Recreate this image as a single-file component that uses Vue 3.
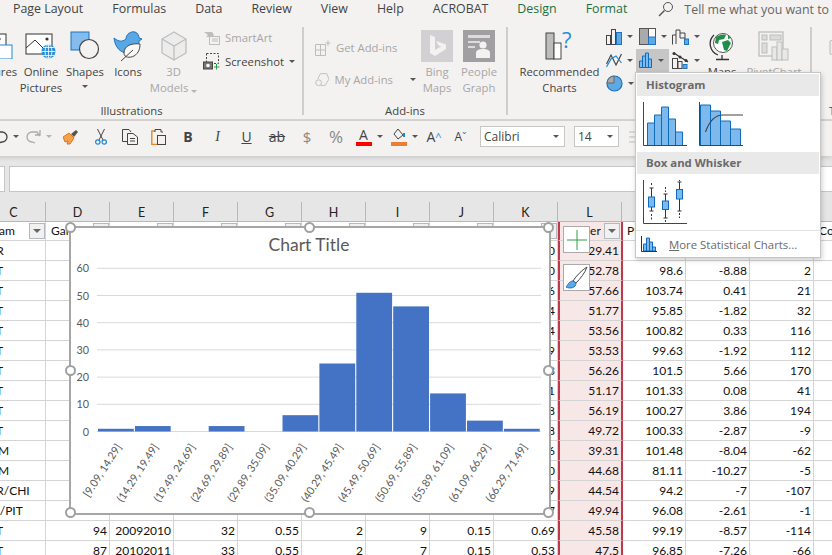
<script setup>
const tabs = ['Page Layout', 'Formulas', 'Data', 'Review', 'View', 'Help', 'ACROBAT', 'Design', 'Format']
const columns = ['C', 'D', 'E', 'F', 'G', 'H', 'I', 'J', 'K', 'L', 'M', 'N', 'O', 'P']
const headers = ['Team', 'Games', '', '', '', '', '', '', '', 'Center', 'PI', '', '', 'Co']

// only the cells which are not hidden behind the chart and the menu
const rows = [
  ['TOR', '', '', '', '', '', '', '', '0.60', '29.41', '', '', '', ''],
  ['DET', '', '', '', '', '', '', '', '0.60', '52.78', '98.6', '-8.88', '2', ''],
  ['DET', '', '', '', '', '', '', '', '0.66', '57.66', '103.74', '0.41', '21', ''],
  ['DET', '', '', '', '', '', '', '', '0.54', '51.77', '95.85', '-1.82', '32', ''],
  ['DET', '', '', '', '', '', '', '', '0.64', '53.56', '100.82', '0.33', '116', ''],
  ['DET', '', '', '', '', '', '', '', '0.59', '53.53', '99.63', '-1.92', '112', ''],
  ['DET', '', '', '', '', '', '', '', '0.63', '56.26', '101.5', '5.66', '170', ''],
  ['DET', '', '', '', '', '', '', '', '0.61', '51.17', '101.33', '0.08', '41', ''],
  ['DET', '', '', '', '', '', '', '', '0.58', '56.19', '100.27', '3.86', '194', ''],
  ['DET', '', '', '', '', '', '', '', '0.58', '49.72', '100.33', '-2.87', '-9', ''],
  ['MEM', '', '', '', '', '', '', '', '0.46', '39.31', '101.48', '-8.04', '-62', ''],
  ['MEM', '', '', '', '', '', '', '', '0.50', '44.68', '81.11', '-10.27', '-5', ''],
  ['TOR/CHI', '', '', '', '', '', '', '', '0.49', '44.54', '94.2', '-7', '-107', ''],
  ['PHI/PIT', '89', '20082009', '31', '0.6', '2', '1', '0.25', '0.7', '49.94', '96.08', '-2.61', '-1', ''],
  ['DET', '94', '20092010', '32', '0.55', '2', '9', '0.15', '0.69', '45.58', '99.19', '-8.57', '-114', ''],
  ['DET', '87', '20102011', '33', '0.55', '2', '7', '0.15', '0.53', '47.5', '96.85', '-7.26', '-66', '']
]

const ticks = [60, 50, 40, 30, 20, 10, 0].map((value) => ({ value, y: 204.5 - value * 2.72 }))

const bins = [
  ['[9.09, 14.29]', 1], ['(14.29, 19.49]', 2], ['(19.49, 24.69]', 0], ['(24.69, 29.89]', 2],
  ['(29.89, 35.09]', 0], ['(35.09, 40.29]', 6], ['(40.29, 45.49]', 25], ['(45.49, 50.69]', 51],
  ['(50.69, 55.89]', 46], ['(55.89, 61.09]', 14], ['(61.09, 66.29]', 4], ['(66.29, 71.49]', 1]
].map(([label, count], i) => ({
  label,
  x: 28 + i * 36.9,
  y: 204.5 - count * 2.72,
  height: count * 2.72
}))

const handles = [
  ['0%', '0%'], ['50%', '0%'], ['100%', '0%'],
  ['0%', '50%'], ['100%', '50%'],
  ['0%', '100%'], ['50%', '100%'], ['100%', '100%']
]
</script>

<template>
  <div class="app">
    <div class="tabs">
      <span v-for="tab in tabs" :key="tab" :class="{ green: tab === 'Design' || tab === 'Format' }">{{ tab }}</span>
      <span class="tell">
        <svg width="16" height="16" viewBox="0 0 16 16"><circle cx="10" cy="6" r="4.5" fill="none" stroke="#555" /><path d="M6.5 9.5L1 15" stroke="#555" stroke-width="1.4" /></svg>
        <em>Tell me what you want to do</em>
      </span>
    </div>

    <div class="ribbon">
      <div class="group illustrations">
        <div class="body">
          <div class="big pictures">
            <div class="icon">
              <svg width="34" height="26" viewBox="0 0 34 26"><rect x="1" y="1" width="26" height="20" fill="#fff" stroke="#333" /><circle cx="20" cy="6" r="1.6" fill="#333" /><rect x="13" y="12" width="20" height="14" fill="#fff" stroke="#1e87d6" /></svg>
            </div>
            <span>Pictures</span>
          </div>
          <div class="big online">
            <div class="icon">
              <svg width="32" height="26" viewBox="0 0 32 26">
                <rect x="1" y="1" width="26" height="20" fill="#fff" stroke="#333" />
                <path d="M1 15L10 7L18 15" fill="none" stroke="#333" />
                <circle cx="22" cy="6" r="1.6" fill="#333" />
                <circle cx="23.5" cy="18.5" r="7" fill="#2a8fd9" />
                <path d="M16.5 18.5H30.5M23.5 11.5V25.5M18 14.5H29M18 22.5H29" stroke="#fff" stroke-width=".8" />
                <ellipse cx="23.5" cy="18.5" rx="3.4" ry="7" fill="none" stroke="#fff" stroke-width=".8" />
              </svg>
            </div>
            <span>Online</span><span>Pictures</span>
          </div>
          <div class="big shapes">
            <div class="icon">
              <svg width="30" height="30" viewBox="0 0 30 30"><rect x="1" y="1" width="18" height="18" fill="#83bced" stroke="#1e73be" /><circle cx="19" cy="18" r="9.5" fill="#f3f2f1" stroke="#444" stroke-width="1.2" /></svg>
            </div>
            <span>Shapes</span><i class="caret"></i>
          </div>
          <div class="big icons">
            <div class="icon">
              <svg width="30" height="32" viewBox="0 0 30 32">
                <path d="M1 8C6 12 9 12 13 9C13 4 18 1 22 2C25 3 26 6 26 8L29 9L26 11C26 18 22 23 15 23C7 23 2 17 1 8Z" fill="#5aa7e6" stroke="#1e73be" />
                <path d="M27 14C20 13 11 15 11 23C11 28 17 28 21 26C26 23 27 18 27 14Z" fill="#f8f8f8" stroke="#444" />
                <path d="M8 31L20 20" stroke="#444" />
              </svg>
            </div>
            <span>Icons</span>
          </div>
          <div class="big muted models">
            <div class="icon">
              <svg width="26" height="30" viewBox="0 0 26 30"><path d="M13 1L25 8V22L13 29L1 22V8Z" fill="#ececec" stroke="#bdbdbd" stroke-width="1.3" /><path d="M1 8L13 15L25 8M13 15V29" fill="none" stroke="#bdbdbd" stroke-width="1.3" /></svg>
            </div>
            <span>3D</span><span>Models <i class="caret light"></i></span>
          </div>
          <div class="small-col art">
            <div class="small muted">
              <svg width="17" height="14" viewBox="0 0 17 14"><path d="M1 1H9L11 4L9 6H3L5 4Z" fill="#bdbdbd" /><rect x="6.5" y="5.5" width="10" height="8" fill="#f3f2f1" stroke="#bdbdbd" /><path d="M9 8H15M9 10H15" stroke="#bdbdbd" /></svg>
              <span>SmartArt</span>
            </div>
            <div class="small">
              <svg width="17" height="17" viewBox="0 0 17 17"><rect x="3.5" y=".5" width="12" height="10" fill="none" stroke="#444" stroke-dasharray="2 1.5" /><rect x=".5" y="9" width="9" height="7" fill="#777" stroke="#444" /><circle cx="5" cy="12.5" r="1.8" fill="#fff" /><path d="M13.5 11V16.5M11 14H16.5" stroke="#2c9e4b" /></svg>
              <span>Screenshot</span><i class="caret"></i>
            </div>
          </div>
        </div>
        <div class="label">Illustrations</div>
      </div>

      <div class="group addins">
        <div class="body">
          <div class="small-col wide">
            <div class="small muted">
              <svg width="16" height="16" viewBox="0 0 16 16"><path d="M.5 4.5H10.5V15.5H.5ZM.5 10H10.5M5.5 4.5V15.5" fill="none" stroke="#bdbdbd" /><path d="M13 .5V6M10.5 3H15.5" stroke="#bdbdbd" /></svg>
              <span>Get Add-ins</span>
            </div>
            <div class="small muted">
              <svg width="16" height="16" viewBox="0 0 16 16"><path d="M6 1L13 1L15.5 7L11 14H6" fill="none" stroke="#bdbdbd" /><path d="M6 1L3 7" stroke="#bdbdbd" /><circle cx="4" cy="11" r="3.2" fill="none" stroke="#bdbdbd" /></svg>
              <span>My Add-ins</span><i class="caret far"></i>
            </div>
          </div>
          <div class="big muted store">
            <div class="icon">
              <svg width="32" height="32" viewBox="0 0 32 32"><rect width="32" height="32" fill="#d2d0d2" /><path d="M9 5L14 7V20L20 16.5L17 15L15.5 11L25 14.5V19L14 26L9 23Z" fill="#f3f2f1" /></svg>
            </div>
            <span>Bing</span><span>Maps</span>
          </div>
          <div class="big muted store">
            <div class="icon">
              <svg width="32" height="32" viewBox="0 0 32 32"><rect width="32" height="32" fill="#a19fa1" /><path d="M5 5H27V8H5ZM5 11H17V13H5ZM5 16H12V18H5Z" fill="#dcdcdc" /><circle cx="20" cy="15" r="3.6" fill="#f3f2f1" /><path d="M13 28V23C13 20 16 19 20 19C24 19 27 20 27 23V28Z" fill="#f3f2f1" /></svg>
            </div>
            <span>People</span><span>Graph</span>
          </div>
        </div>
        <div class="label">Add-ins</div>
      </div>

      <div class="group charts">
        <div class="body">
          <div class="big recommended">
            <div class="icon">
              <svg width="30" height="30" viewBox="0 0 30 30"><rect x="1" y="2" width="8" height="26" fill="#bdbdbb" stroke="#444" /><rect x="9" y="12" width="7" height="16" fill="#fff" stroke="#444" /><text x="17" y="17" class="help">?</text></svg>
            </div>
            <span>Recommended</span><span>Charts</span>
          </div>
          <div class="chart-grid">
            <div class="mini">
              <svg width="16" height="16" viewBox="0 0 16 16"><rect x=".5" y="6.5" width="4" height="9" fill="#f3f2f1" stroke="#444" /><rect x="5.5" y=".5" width="4" height="15" fill="#f3f2f1" stroke="#444" /><rect x="10.5" y="3.5" width="5" height="12" fill="#5ca9e6" stroke="#1e73be" /></svg><i class="caret"></i>
            </div>
            <div class="mini">
              <svg width="17" height="17" viewBox="0 0 17 17"><rect x=".5" y=".5" width="16" height="16" fill="#fff" stroke="#555" /><rect x=".5" y=".5" width="9" height="16" fill="#aaa" stroke="#555" /><rect x="9.5" y="9" width="7" height="7.5" fill="#5ca9e6" stroke="#1e73be" /></svg><i class="caret"></i>
            </div>
            <div class="mini">
              <svg width="17" height="16" viewBox="0 0 17 16"><path d="M.5 15.5V6H4V1H8V4H13V15.5" fill="none" stroke="#444" /><path d="M4 15V6M8 4V9H13" fill="none" stroke="#444" /><rect x="12.5" y="10" width="4" height="5.5" fill="#5ca9e6" stroke="#1e73be" /></svg><i class="caret"></i>
            </div>
            <div class="mini">
              <svg width="16" height="16" viewBox="0 0 16 16"><path d="M.5 12L5 3L10 13L15.5 2" fill="none" stroke="#444" stroke-width="1.2" /><path d="M.5 15L5 7L10 4L15.5 11" fill="none" stroke="#1e87d6" stroke-width="1.2" /></svg><i class="caret"></i>
            </div>
            <div class="mini active">
              <svg width="14" height="16" viewBox="0 0 14 16"><path d="M.5 15.5V9H3.5V4H6.5V1H9.5V7H12.5V15.5ZM3.5 9V15.5M6.5 4V15.5M9.5 7V15.5" fill="#7db9ec" stroke="#0f6cbd" /></svg><i class="caret"></i>
            </div>
            <div class="mini">
              <svg width="17" height="17" viewBox="0 0 17 17"><path d="M2 1L8 5L13 8L16 10" fill="none" stroke="#333" stroke-width="1.2" /><circle cx="2" cy="1.6" r="1.5" fill="#333" /><circle cx="8" cy="5" r="1.5" fill="#333" /><circle cx="14" cy="8.5" r="1.5" fill="#333" /><rect x=".5" y="6.5" width="5" height="10" fill="#f3f2f1" stroke="#444" /><rect x="6" y="9.5" width="4" height="7" fill="#f3f2f1" stroke="#444" /><rect x="11" y="12.5" width="4" height="4" fill="#5ca9e6" stroke="#1e73be" /></svg><i class="caret"></i>
            </div>
            <div class="mini">
              <svg width="17" height="17" viewBox="0 0 17 17"><circle cx="8.5" cy="8.5" r="7.5" fill="#5ca9e6" stroke="#1e73be" stroke-width="1.2" /><path d="M8 8V1A7.5 7.5 0 0 0 1 8Z" fill="#aaa" stroke="#666" /></svg><i class="caret"></i>
            </div>
          </div>
          <div class="big maps">
            <div class="icon">
              <svg width="26" height="30" viewBox="0 0 26 30">
                <circle cx="14" cy="12" r="9.5" fill="#fff" stroke="#555" />
                <path d="M7 6C10 4 14 3 17 4L15 8L10 9L9 13L6 12ZM13 11L19 9L22 12L18 20L15 19ZM19 4L22 7L19 8Z" fill="#1f8f45" />
                <path d="M5 4A12 12 0 0 0 9 24M13 24V28M7 28.5H20" fill="none" stroke="#333" stroke-width="1.3" />
              </svg>
            </div>
            <span>Maps</span>
          </div>
          <div class="big muted pivot">
            <div class="icon">
              <svg width="32" height="30" viewBox="0 0 32 30"><rect x="1" y="1" width="24" height="24" fill="#f3f2f1" stroke="#bdbdbd" stroke-width="1.3" /><rect x="4" y="4" width="5" height="5" fill="#dcdcdc" stroke="#bdbdbd" /><rect x="12" y="4" width="11" height="5" fill="#dcdcdc" stroke="#bdbdbd" /><rect x="4" y="12" width="5" height="10" fill="#dcdcdc" stroke="#bdbdbd" /><rect x="14" y="16" width="5" height="13" fill="#e8e8e8" stroke="#bdbdbd" /><rect x="19" y="11" width="5" height="18" fill="#e8e8e8" stroke="#bdbdbd" /><rect x="24" y="18" width="6" height="11" fill="#e8e8e8" stroke="#bdbdbd" /></svg>
            </div>
            <span>PivotChart</span>
          </div>
        </div>
        <div class="label">Charts</div>
      </div>

      <div class="group tours">
        <div class="body">
          <div class="big muted tour">
            <div class="icon">
              <svg width="32" height="24" viewBox="0 0 32 24"><path d="M16 1L30 7V20L16 23L2 20V7Z" fill="#ececec" stroke="#bdbdbd" /></svg>
            </div>
            <span>3D</span><span>Map</span>
          </div>
        </div>
        <div class="label">Tours</div>
      </div>
    </div>

    <div class="toolbar">
      <div class="tool w32">
        <svg width="14" height="15" viewBox="0 0 14 15"><path d="M0 3H8A5 5 0 0 1 8 13L4 14" fill="none" stroke="#444" stroke-width="1.3" /></svg><i class="caret"></i>
      </div>
      <div class="tool w34">
        <svg width="15" height="15" viewBox="0 0 15 15"><path d="M14 7L11 3H6A5 5 0 0 0 6 13L9 14M14 1V6H9" fill="none" stroke="#aaa" stroke-width="1.3" /></svg><i class="caret light"></i>
      </div>
      <div class="tool w30">
        <svg width="16" height="16" viewBox="0 0 16 16"><path d="M0 8L6 4L11 9L7 15H4L5 12L2 13Z" fill="#f5a04a" stroke="#d9771f" /><path d="M8 5L13 1L15 3L11 8Z" fill="#555" /></svg>
      </div>
      <div class="tool w29">
        <svg width="12" height="16" viewBox="0 0 12 16"><path d="M2.5 0L8 11M9.5 0L4 11" stroke="#444" /><circle cx="2.8" cy="13" r="2.2" fill="none" stroke="#1e87d6" stroke-width="1.2" /><circle cx="9.2" cy="13" r="2.2" fill="none" stroke="#1e87d6" stroke-width="1.2" /></svg>
      </div>
      <div class="tool w29">
        <svg width="16" height="16" viewBox="0 0 16 16"><path d="M5.5 12.5H.5V.5H7L9 3" fill="none" stroke="#444" /><path d="M5.5 4.5H11L15.5 8V15.5H5.5Z" fill="#f3f2f1" stroke="#444" /><path d="M8 9.5H13M8 12H13" stroke="#444" /></svg>
      </div>
      <div class="tool w29">
        <svg width="15" height="16" viewBox="0 0 15 16"><path d="M4 2H.8V15.5H6" fill="none" stroke="#e8862c" stroke-width="1.4" /><path d="M4 3V.5H10V3H12" fill="none" stroke="#444" /><rect x="6.5" y="6.5" width="8" height="9" fill="#f3f2f1" stroke="#444" /></svg>
      </div>
      <div class="tool w30 glyph bold">B</div>
      <div class="tool w29 glyph italic">I</div>
      <div class="tool w29 glyph under">U</div>
      <div class="tool w32 glyph strike">ab</div>
      <div class="tool w28 glyph gray">$</div>
      <div class="tool w30 glyph gray big-glyph">%</div>
      <div class="tool w36">
        <div class="swatch"><b>A</b><u class="red"></u></div><i class="caret"></i>
      </div>
      <div class="tool w35">
        <div class="swatch">
          <svg width="13" height="13" viewBox="0 0 13 13"><path d="M5 1L10 7L5 11L1 6Z" fill="none" stroke="#444" /><path d="M11 5V9" stroke="#1e87d6" stroke-width="2" /></svg>
          <u class="orange"></u>
        </div><i class="caret"></i>
      </div>
      <div class="tool w24 grow">A<sup>^</sup></div>
      <div class="tool w29 grow shrink">A<sup>ˇ</sup></div>
      <div class="select font"><span>Calibri</span><i class="caret"></i></div>
      <div class="select size"><span>14</span><i class="caret"></i></div>
      <svg class="align" width="14" height="12" viewBox="0 0 14 12"><path d="M0 1H14M0 6H14M0 11H14" stroke="#bbb" /></svg>
    </div>

    <div class="formula">
      <div class="namebox"></div>
      <div class="fx"></div>
    </div>

    <div class="sheet">
      <div class="col-heads">
        <div v-for="col in columns" :key="col" class="col-head">{{ col }}</div>
      </div>
      <div class="row head-row">
        <div v-for="(title, i) in headers" :key="i" class="cell head" :class="{ sel: i === 9 }">
          <span class="title">{{ title }}</span>
          <span v-if="i < 13 && i !== 10" class="filter"><i></i></span>
        </div>
      </div>
      <div v-for="(row, r) in rows" :key="r" class="row">
        <div v-for="(value, i) in row" :key="i" class="cell" :class="{ text: i === 0, sel: i === 9 }">{{ value }}</div>
      </div>

      <!-- chart floats over the cells -->
      <div class="chart">
        <svg width="480" height="287" viewBox="0 0 480 287">
          <text x="239" y="24" class="chart-title" text-anchor="middle">Chart Title</text>
          <g v-for="tick in ticks" :key="tick.value">
            <line x1="27" x2="471" :y1="tick.y" :y2="tick.y" stroke="#d9d9d9" />
            <text x="19" :y="tick.y + 4" class="axis" text-anchor="end">{{ tick.value }}</text>
          </g>
          <g v-for="bin in bins" :key="bin.label">
            <rect :x="bin.x" :y="bin.y" width="35.8" :height="bin.height" fill="#4472c4" />
            <text class="axis cat" text-anchor="end" :transform="`translate(${bin.x + 24} 220) rotate(-57)`">{{ bin.label }}</text>
          </g>
        </svg>
        <span v-for="(h, i) in handles" :key="i" class="handle" :style="{ left: h[0], top: h[1] }"></span>
      </div>

      <div class="chart-btn plus">
        <svg width="20" height="20" viewBox="0 0 20 20"><path d="M10 0V20M0 10H20" stroke="#2c9e4b" /></svg>
      </div>
      <div class="chart-btn brush">
        <svg width="24" height="24" viewBox="0 0 24 24"><path d="M22 1C17 4 11 10 8 15L11 17C15 13 20 7 22 1Z" fill="#fff" stroke="#444" /><path d="M8 15C4 15 3 19 1 21C5 23 11 22 11 17Z" fill="#5ca9e6" stroke="#1e73be" /></svg>
      </div>
    </div>

    <div class="menu">
      <div class="menu-head">Histogram</div>
      <div class="menu-icons">
        <svg width="44" height="44" viewBox="0 0 44 44">
          <path d="M4.5 21H11.5V43.5H4.5ZM11.5 13H18.5V43.5H11.5ZM18.5 5H25.5V43.5H18.5ZM25.5 17H32.5V43.5H25.5ZM32.5 30H39.5V43.5H32.5Z" fill="#7db9ec" stroke="#0f6cbd" />
          <path d="M.5 0V43.5H44" fill="none" stroke="#444" />
        </svg>
        <svg width="44" height="44" viewBox="0 0 44 44">
          <path d="M1.5 3H11.5V43.5H1.5ZM11.5 9H21.5V43.5H11.5ZM21.5 19H31.5V43.5H21.5ZM31.5 27H41.5V43.5H31.5Z" fill="#7db9ec" stroke="#0f6cbd" />
          <path d="M.5 0V43.5H44" fill="none" stroke="#444" />
          <path d="M6.5 30C10 20 16 13 24 13H44" fill="none" stroke="#444" stroke-width="1.2" />
        </svg>
      </div>
      <div class="menu-head">Box and Whisker</div>
      <div class="menu-icons">
        <svg width="44" height="44" viewBox="0 0 44 44">
          <path d="M.5 0V43.5H44" fill="none" stroke="#444" />
          <path d="M8.5 8V31M22.5 14V38M36.5 2V31M6.5 8H10.5M6.5 31H10.5M20.5 14H24.5M20.5 38H24.5M34.5 2H38.5M34.5 31H38.5" stroke="#333" />
          <path d="M8.5 3V6M8.5 34V40M22.5 7V12M22.5 40V42M36.5 0V1M36.5 33V38" stroke="#333" stroke-dasharray="2 1.5" />
          <rect x="5.5" y="17" width="6" height="10" fill="#7db9ec" stroke="#0f6cbd" />
          <rect x="19.5" y="21" width="6" height="8.5" fill="#7db9ec" stroke="#0f6cbd" />
          <rect x="33.5" y="9.5" width="6" height="9.5" fill="#7db9ec" stroke="#0f6cbd" />
        </svg>
      </div>
      <div class="menu-more">
        <svg width="16" height="16" viewBox="0 0 16 16"><path d="M2.5 15V8H5.5V2H8.5V6H11.5V11H14.5V15Z" fill="#7db9ec" stroke="#0f6cbd" /><path d="M5.5 8V15M8.5 6V15M11.5 11V15" stroke="#0f6cbd" /><path d="M.5 0V15.5H16" fill="none" stroke="#333" /></svg>
        <span><u>M</u>ore Statistical Charts...</span>
      </div>
    </div>
  </div>
</template>

<style>
html, body { margin: 0; background: #e6e6e6; }
</style>

<style scoped>
.app {
  position: relative;
  width: 832px;
  height: 555px;
  overflow: hidden;
  background: #e6e6e6;
  font-family: "Open Sans", sans-serif;
  font-size: 11.3px;
  color: #444;
}

.tabs {
  height: 18px;
  display: flex;
  gap: 29px;
  padding-left: 13px;
  background: #f3f2f1;
  font-size: 12.4px;
  line-height: 17px;
  white-space: nowrap;
}
.tabs .green { color: #1d6f42; }
.tell {
  display: flex;
  align-items: center;
  gap: 10px;
  margin-left: 2px;
  color: #666;
}
.tell em { font-style: normal; }

.ribbon {
  display: flex;
  height: 92px;
  padding-top: 9px;
  margin-left: -26px;
  width: 900px;
  background: #f3f2f1;
  border-bottom: 2px solid #d6d4d2;
}
.group {
  display: flex;
  flex-direction: column;
  height: 88px;
  flex: none;
  box-sizing: border-box;
  border-right: 2px solid #d0cecc;
}
.group .body { display: flex; height: 76px; flex: none; }
.group .label { text-align: center; line-height: 16px; color: #444; height: 12px; }
.illustrations { width: 330px; }
.addins { width: 204px; }
.charts { width: 304px; }
.tours { width: 60px; border-right: 0; padding-left: 9px; }
.tours .label { width: 46px; }
.illustrations .label { padding-right: 13px; }
.charts .label { visibility: hidden; }

.big {
  display: flex;
  flex-direction: column;
  align-items: center;
  flex: none;
  line-height: 16px;
  white-space: nowrap;
}
.big .icon {
  height: 37px;
  display: flex;
  align-items: center;
  justify-content: center;
}
.big .caret { margin-top: 5px; }
.muted, .muted span { color: #a8a6a6; }
.pictures { width: 44px; }
.online { width: 46px; }
.shapes { width: 42px; }
.icons { width: 44px; }
.models { width: 47px; }
.store { width: 42px; }
.recommended { width: 87px; }
.maps { width: 42px; }
.pivot { width: 62px; }
.tour { width: 46px; }
.recommended .help { font-size: 22px; fill: #2a8fd9; }

.small-col { display: flex; flex-direction: column; width: 100px; margin-left: 6px; }
.small-col.art { gap: 3px; }
.small-col.wide { gap: 11px; margin-left: 11px; width: 101px; padding-top: 10px; }
.small { display: flex; align-items: center; gap: 5px; height: 21px; white-space: nowrap; }
.small .caret { margin-left: 0; }
.small .caret.far { margin-left: 12px; }

.charts .body { padding-left: 8px; }
.chart-grid {
  display: grid;
  grid-template-columns: repeat(3, 33px);
  grid-auto-rows: 23.5px;
  width: 99px;
  margin-top: -2px;
  margin-right: -1px;
}
.mini {
  display: flex;
  align-items: center;
  gap: 5px;
  padding-left: 3px;
}
.mini.active { background: #c6c6c6; }

.caret {
  display: inline-block;
  width: 0;
  height: 0;
  border-left: 3.5px solid transparent;
  border-right: 3.5px solid transparent;
  border-top: 3.5px solid #555;
  vertical-align: middle;
  flex: none;
}
.caret.light { border-top-color: #b5b5b5; }

.toolbar {
  position: relative;
  z-index: 1;
  display: flex;
  align-items: center;
  height: 35px;
  padding-bottom: 4px;
  box-sizing: border-box;
  margin-left: -10px;
  background: #f3f2f1;
  box-shadow: 0 2px 4px rgba(0, 0, 0, .12);
}
.tool {
  display: flex;
  align-items: center;
  justify-content: center;
  gap: 5px;
  flex: none;
  height: 31px;
  color: #444;
}
.w24 { width: 24px; }
.w28 { width: 28px; }
.w29 { width: 29px; }
.w30 { width: 30px; }
.w32 { width: 32px; }
.w34 { width: 34px; }
.w35 { width: 35px; }
.w36 { width: 36px; }
.glyph { font-size: 14px; }
.bold { font-weight: 700; }
.italic { font-style: italic; font-family: "Liberation Serif", serif; }
.under { text-decoration: underline; }
.strike { text-decoration: line-through; }
.gray { color: #888; font-size: 15px; }
.big-glyph { font-size: 17px; }
.swatch {
  display: flex;
  flex-direction: column;
  align-items: center;
  width: 16px;
  font-size: 14px;
  line-height: 15px;
}
.swatch b { font-weight: 400; }
.swatch svg { height: 15px; }
.swatch u { display: block; width: 16px; height: 4px; }
.swatch .red { background: #f00; }
.swatch .orange { background: #ed7d31; }
.grow { font-size: 14px; gap: 0; }
.grow sup { font-size: 11px; color: #1e87d6; line-height: 0; }
.shrink { font-size: 12px; }
.select {
  display: flex;
  align-items: center;
  justify-content: space-between;
  flex: none;
  height: 21px;
  box-sizing: border-box;
  padding: 0 5px 0 3px;
  background: #fff;
  border: 1px solid #c6c6c6;
  font-size: 12px;
  color: #444;
}
.font { width: 85px; margin-left: 5px; }
.size { width: 45px; margin-left: 9px; }
.align { margin-left: 10px; flex: none; }

.formula {
  display: flex;
  gap: 4px;
  height: 46px;
  padding-top: 10px;
  box-sizing: border-box;
}
.namebox, .fx {
  height: 26px;
  box-sizing: border-box;
  background: #fff;
  border: 1px solid #c6c6c6;
}
.namebox { width: 20px; margin-left: -15px; flex: none; }
.fx { flex: 1; border-right: 0; }

.sheet {
  position: absolute;
  left: -18px;
  top: 202px;
  width: 880px;
  height: 353px;
  background: #fff;
  font-family: Lato, sans-serif;
  font-size: 12px;
  color: #111;
}
.col-heads {
  display: flex;
  height: 20px;
  background: #e6e6e6;
  border-bottom: 1px solid #b8b8b8;
  box-sizing: border-box;
}
.col-head {
  flex: none;
  width: 64px;
  box-sizing: border-box;
  border-right: 1px solid #b8b8b8;
  text-align: center;
  line-height: 21px;
  font-size: 12.5px;
  color: #222;
}
.row { display: flex; height: 20px; }
.head-row { height: 19px; }
.cell {
  flex: none;
  width: 64px;
  box-sizing: border-box;
  border-right: 1px solid #d4d4d4;
  border-bottom: 1px solid #d4d4d4;
  text-align: right;
  padding-right: 2px;
  line-height: 20px;
  white-space: nowrap;
  overflow: hidden;
}
.cell.text { text-align: left; padding-left: 0; text-indent: -2px; }
.cell.sel {
  background: #f8e7e7;
  border-left: 2px solid #c0394b;
  border-right: 2px solid #c0394b;
  width: 65px;
  margin-right: -1px;
  position: relative;
}
.cell.head {
  display: flex;
  align-items: center;
  justify-content: space-between;
  padding: 0 0 0 5px;
  text-align: left;
  line-height: 18px;
}
.cell.head.sel { padding-right: 1px; }
.title { overflow: hidden; }
.filter {
  flex: none;
  width: 16px;
  height: 16px;
  box-sizing: border-box;
  display: flex;
  align-items: center;
  justify-content: center;
  background: #f1f1f1;
  border: 1px solid #b4b9bf;
}
.filter i {
  border-left: 4px solid transparent;
  border-right: 4px solid transparent;
  border-top: 4px solid #666;
}

.chart {
  position: absolute;
  left: 88px;
  top: 25px;
  width: 480px;
  height: 287px;
  box-sizing: border-box;
  background: #fff;
  border: 1px solid #a6a6a6;
  outline: 1px solid #a6a6a6;
}
.chart > svg { position: absolute; left: -1px; top: -1px; }
.chart-title { font-family: Lato, sans-serif; font-size: 17.5px; fill: #595959; }
.axis { font-family: Lato, sans-serif; font-size: 10.8px; fill: #595959; }
.handle {
  position: absolute;
  width: 11px;
  height: 11px;
  margin: -6px 0 0 -6px;
  box-sizing: border-box;
  border-radius: 50%;
  border: 2px solid #a0a0a0;
  background: #fff;
}
.chart-btn {
  position: absolute;
  left: 581px;
  width: 27px;
  height: 27px;
  box-sizing: border-box;
  display: flex;
  align-items: center;
  justify-content: center;
  background: #fff;
  border: 1px solid #aaa;
}
.plus { top: 24px; }
.brush { top: 62px; }

.menu {
  position: absolute;
  left: 635px;
  top: 72px;
  width: 186px;
  height: 186px;
  box-sizing: border-box;
  z-index: 2;
  padding: 1px;
  background: #fff;
  border: 1px solid #c6c6c6;
  box-shadow: 1px 2px 5px rgba(0, 0, 0, .2);
}
.menu-head {
  height: 22px;
  padding-left: 9px;
  background: #e9e9e9;
  font-weight: 700;
  font-size: 11.4px;
  line-height: 21px;
  color: #6a6a6a;
}
.menu-icons {
  display: flex;
  gap: 12px;
  height: 56px;
  padding: 6px 0 0 6px;
  box-sizing: border-box;
}
.menu-more {
  display: flex;
  align-items: center;
  gap: 12px;
  height: 26px;
  margin: 0 -1px;
  padding-left: 5px;
  border-top: 1px solid #e2e2e2;
  font-size: 11.4px;
  color: #6a6a6a;
}
</style>
